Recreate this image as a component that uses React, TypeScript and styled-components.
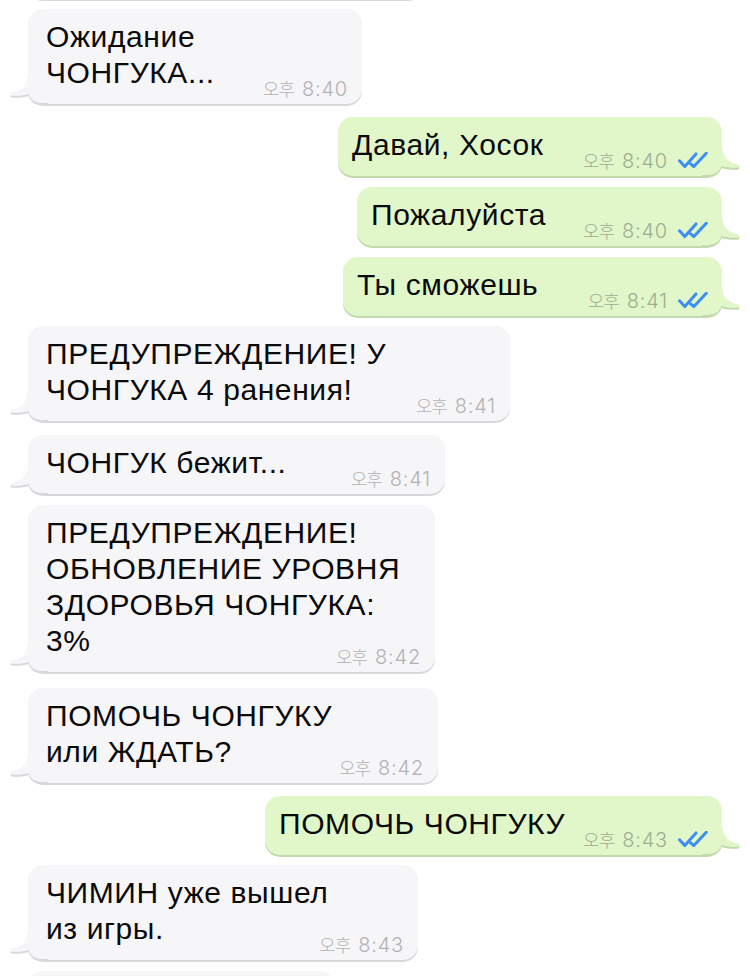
import styled, { createGlobalStyle } from 'styled-components'

type Side = 'in' | 'out'

type Message = {
  side: Side
  lines: string[]
  time: string
  w: number
  mt: number
}

const messages: Message[] = [
  { side: 'in', lines: ['Ожидание', 'ЧОНГУКА...'], time: '8:40', w: 334, mt: 10 },
  { side: 'out', lines: ['Давай, Хосок'], time: '8:40', w: 384, mt: 13 },
  { side: 'out', lines: ['Пожалуйста'], time: '8:40', w: 365, mt: 11 },
  { side: 'out', lines: ['Ты сможешь'], time: '8:41', w: 379, mt: 11 },
  {
    side: 'in',
    lines: ['ПРЕДУПРЕЖДЕНИЕ! У', 'ЧОНГУКА 4 ранения!'],
    time: '8:41',
    w: 482,
    mt: 10,
  },
  { side: 'in', lines: ['ЧОНГУК бежит...'], time: '8:41', w: 417, mt: 14 },
  {
    side: 'in',
    lines: ['ПРЕДУПРЕЖДЕНИЕ!', 'ОБНОВЛЕНИЕ УРОВНЯ', 'ЗДОРОВЬЯ ЧОНГУКА:', '3%'],
    time: '8:42',
    w: 407,
    mt: 11,
  },
  { side: 'in', lines: ['ПОМОЧЬ ЧОНГУКУ', 'или ЖДАТЬ?'], time: '8:42', w: 410, mt: 16 },
  { side: 'out', lines: ['ПОМОЧЬ ЧОНГУКУ'], time: '8:43', w: 457, mt: 13 },
  { side: 'in', lines: ['ЧИМИН уже вышел', 'из игры.'], time: '8:43', w: 390, mt: 10 },
]

const palette = {
  in: { bg: '#f6f5f8', shadow: '#d8d8dc', meta: '#b2b2b6' },
  out: { bg: '#e1f7ca', shadow: '#c3d9ae', meta: '#9aae90' },
}

const GlobalStyle = createGlobalStyle`
  html, body {
    margin: 0;
    padding: 0;
    background: #ffffff;
  }
  body {
    font-family: "Liberation Sans", Arial, "Noto Sans CJK KR", sans-serif;
    -webkit-font-smoothing: antialiased;
  }
`

const Tail = ({ side }: { side: Side }) => (
  <TailSvg $side={side} width="40" height="31" viewBox="0 0 40 31">
    <path
      d="M20 0 C20 11 15 17 4 19.5 C1.8 20.2 2.2 22.8 5 22.8 C12 23 17 22.2 20.5 21 C22 26 27 30 34 30 L40 30 L40 0 Z"
      fill={palette[side].bg}
    />
  </TailSvg>
)

const Checks = () => (
  <svg width="30" height="17" viewBox="0 0 30 17">
    <path
      d="M1.5 8.8 L6.8 14.6 L18 1.9 M12.6 11.8 L15.9 14.6 L28.3 1.2"
      fill="none"
      stroke="#3d8ef2"
      strokeWidth="3"
      strokeLinecap="round"
      strokeLinejoin="round"
    />
  </svg>
)

const Bubble = ({ m }: { m: Message }) => (
  <Box $side={m.side} $w={m.w} $mt={m.mt}>
    <Tail side={m.side} />
    <Text>
      {m.lines.map((line, i) => (
        <Line key={i}>{line}</Line>
      ))}
    </Text>
    <Meta $side={m.side}>
      <Time>
        <Ko>오후</Ko>
        <Clock>{m.time}</Clock>
      </Time>
      {m.side === 'out' && <Checks />}
    </Meta>
  </Box>
)

export default function App() {
  return (
    <>
      <GlobalStyle />
      <Chat>
        <Box $side="in" $w={395} $mt={-60} />
        {messages.map((m, i) => (
          <Bubble key={i} m={m} />
        ))}
        <Box $side="in" $w={307} $mt={11}>
          <Tail side="in" />
        </Box>
      </Chat>
    </>
  )
}

const Chat = styled.div`
  display: flex;
  flex-direction: column;
  height: 976px;
  overflow: hidden;
  padding: 0 28px;
`

const Box = styled.div<{ $side: Side; $w: number; $mt: number }>`
  position: relative;
  z-index: 0;
  flex-shrink: 0;
  box-sizing: border-box;
  width: ${(p) => p.$w}px;
  min-height: 59px;
  margin-top: ${(p) => p.$mt}px;
  align-self: ${(p) => (p.$side === 'in' ? 'flex-start' : 'flex-end')};
  display: grid;
  padding: 10px 14px 5px ${(p) => (p.$side === 'in' ? 18 : 14)}px;
  border-radius: 15px;
  background: ${(p) => palette[p.$side].bg};
  box-shadow: 0 2px 0 ${(p) => palette[p.$side].shadow};
`

const TailSvg = styled.svg<{ $side: Side }>`
  position: absolute;
  z-index: -1;
  bottom: 0;
  ${(p) => (p.$side === 'in' ? 'left: -20px;' : 'right: -20px; transform: scaleX(-1);')}
  filter: drop-shadow(0 2px 0 ${(p) => palette[p.$side].shadow});
`

const Text = styled.div`
  grid-area: 1 / 1;
  padding-bottom: 8px;
  font-size: 30px;
  line-height: 36px;
  letter-spacing: 0.6px;
  color: #0a0a0a;
  white-space: nowrap;
`

const Line = styled.div``

const Meta = styled.div<{ $side: Side }>`
  grid-area: 1 / 1;
  justify-self: end;
  align-self: end;
  display: flex;
  align-items: center;
  gap: 10px;
  color: ${(p) => palette[p.$side].meta};
`

const Time = styled.span`
  display: flex;
  align-items: baseline;
  gap: 8px;
  line-height: 20px;
`

const Ko = styled.span`
  font-family: "Noto Sans CJK KR", sans-serif;
  font-size: 18px;
  font-weight: 300;
  letter-spacing: -1px;
`

const Clock = styled.span`
  font-family: Inter, "Liberation Sans", sans-serif;
  font-size: 20px;
  font-weight: 300;
  letter-spacing: 0.8px;
`
